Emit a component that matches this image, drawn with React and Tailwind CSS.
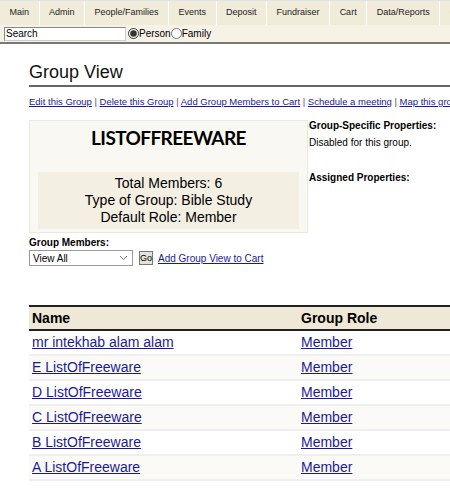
import React from 'react';

const menu = ['Main', 'Admin', 'People/Families', 'Events', 'Deposit', 'Fundraiser', 'Cart', 'Data/Reports', 'Groups'];

const actions = ['Edit this Group', 'Delete this Group', 'Add Group Members to Cart', 'Schedule a meeting', 'Map this group'];

const members = [
  'mr intekhab alam alam',
  'E ListOfFreeware',
  'D ListOfFreeware',
  'C ListOfFreeware',
  'B ListOfFreeware',
  'A ListOfFreeware'
];

const App = () => {
  return (
    <div className="w-[450px] h-[492px] overflow-hidden bg-white font-['Liberation_Sans',Arial,sans-serif] text-black">
      {/* top menu */}
      <div className="flex h-[25px] bg-[#f1ebda] border-t border-[#dde3ea] whitespace-nowrap">
        {menu.map((m) => (
          <div key={m} className="flex items-center px-[9.5px] text-[9px] text-[#222] border-r border-white">
            {m}
          </div>
        ))}
      </div>

      {/* search */}
      <div className="flex items-center h-[19px] bg-[#f6f2e6] border-b-2 border-[#777] pl-[4px]">
        <input
          readOnly
          value="Search"
          className="w-[122px] h-[14px] bg-white border border-[#888] border-r-[#ccc] border-b-[#ccc] px-[1px] text-[10px] outline-none"
        />
        <label className="flex items-center text-[10px] ml-[2px]">
          <input type="radio" readOnly checked name="t" className="w-[11px] h-[11px] m-0 accent-[#333]" />
          Person
        </label>
        <label className="flex items-center text-[10px]">
          <input type="radio" readOnly name="t" className="w-[11px] h-[11px] m-0" />
          Family
        </label>
      </div>

      <div className="pl-[29px]">
        <h1 className="mt-[17px] text-[18px] leading-[22px] text-[#111] border-b-2 border-[#666] pb-[2px]">
          Group View
        </h1>

        <div className="mt-[8px] text-[9.5px] whitespace-nowrap text-[#555]">
          {actions.map((a, i) => (
            <span key={a}>
              {i > 0 && ' | '}
              <a className="text-[#1a1a99] underline">{a}</a>
            </span>
          ))}
        </div>

        <div className="flex mt-[11px]">
          <div className="w-[279px] h-[113px] bg-[#faf8f2] border border-[#ece8dc] flex flex-col items-center px-[8px]">
            <div className="mt-[6px] font-['Lato',sans-serif] font-bold text-[19px] leading-[22px] tracking-[-0.6px]">LISTOFFREEWARE</div>
            <div className="mt-[23px] w-full bg-[#f3efe2] text-center text-[14px] leading-[17px] py-[3px]">
              <div>Total Members: 6</div>
              <div>Type of Group: Bible Study</div>
              <div>Default Role: Member</div>
            </div>
          </div>
          <div className="ml-[1px] text-[10px] leading-[12px] whitespace-nowrap">
            <div className="font-bold">Group-Specific Properties:</div>
            <div className="mt-[5px]">Disabled for this group.</div>
            <div className="mt-[23px] font-bold">Assigned Properties:</div>
          </div>
        </div>

        <div className="mt-[4px] text-[10px] font-bold leading-[12px]">Group Members:</div>
        <div className="flex items-center mt-[1px]">
          <div className="w-[104px] h-[16px] border border-[#999] bg-white flex items-center justify-between px-[3px] text-[10px]">
            <span>View All</span>
            <svg width="9" height="6" viewBox="0 0 9 6" className="mr-[1px]">
              <path d="M1 1l3.5 3.5L8 1" fill="none" stroke="#777" strokeWidth="1" />
            </svg>
          </div>
          <div className="ml-[6px] w-[14px] h-[14px] border border-[#777] bg-[#e6e2d6] text-[9px] flex items-center justify-center">Go</div>
          <a className="ml-[5px] text-[10px] text-[#1a1a99] underline">Add Group View to Cart</a>
        </div>

        {/* members table */}
        <div className="mt-[39px] w-[421px] text-[14px]">
          <div className="flex items-center h-[26px] bg-[#efe8d6] border-t-2 border-b-2 border-[#222] font-bold">
            <div className="w-[272px] pl-[3px]">Name</div>
            <div>Group Role</div>
          </div>
          {members.map((n, i) => (
            <div key={n} className={`flex items-center h-[25px] border-b-2 border-[#efefef] ${i % 2 ? 'bg-[#fbfaf6]' : 'bg-white'}`}>
              <div className="w-[272px] pl-[3px]">
                <a className="text-[#1a1a99] underline">{n}</a>
              </div>
              <div>
                <a className="text-[#1a1a99] underline">Member</a>
              </div>
            </div>
          ))}
        </div>
      </div>
    </div>
  );
};

export default App;
